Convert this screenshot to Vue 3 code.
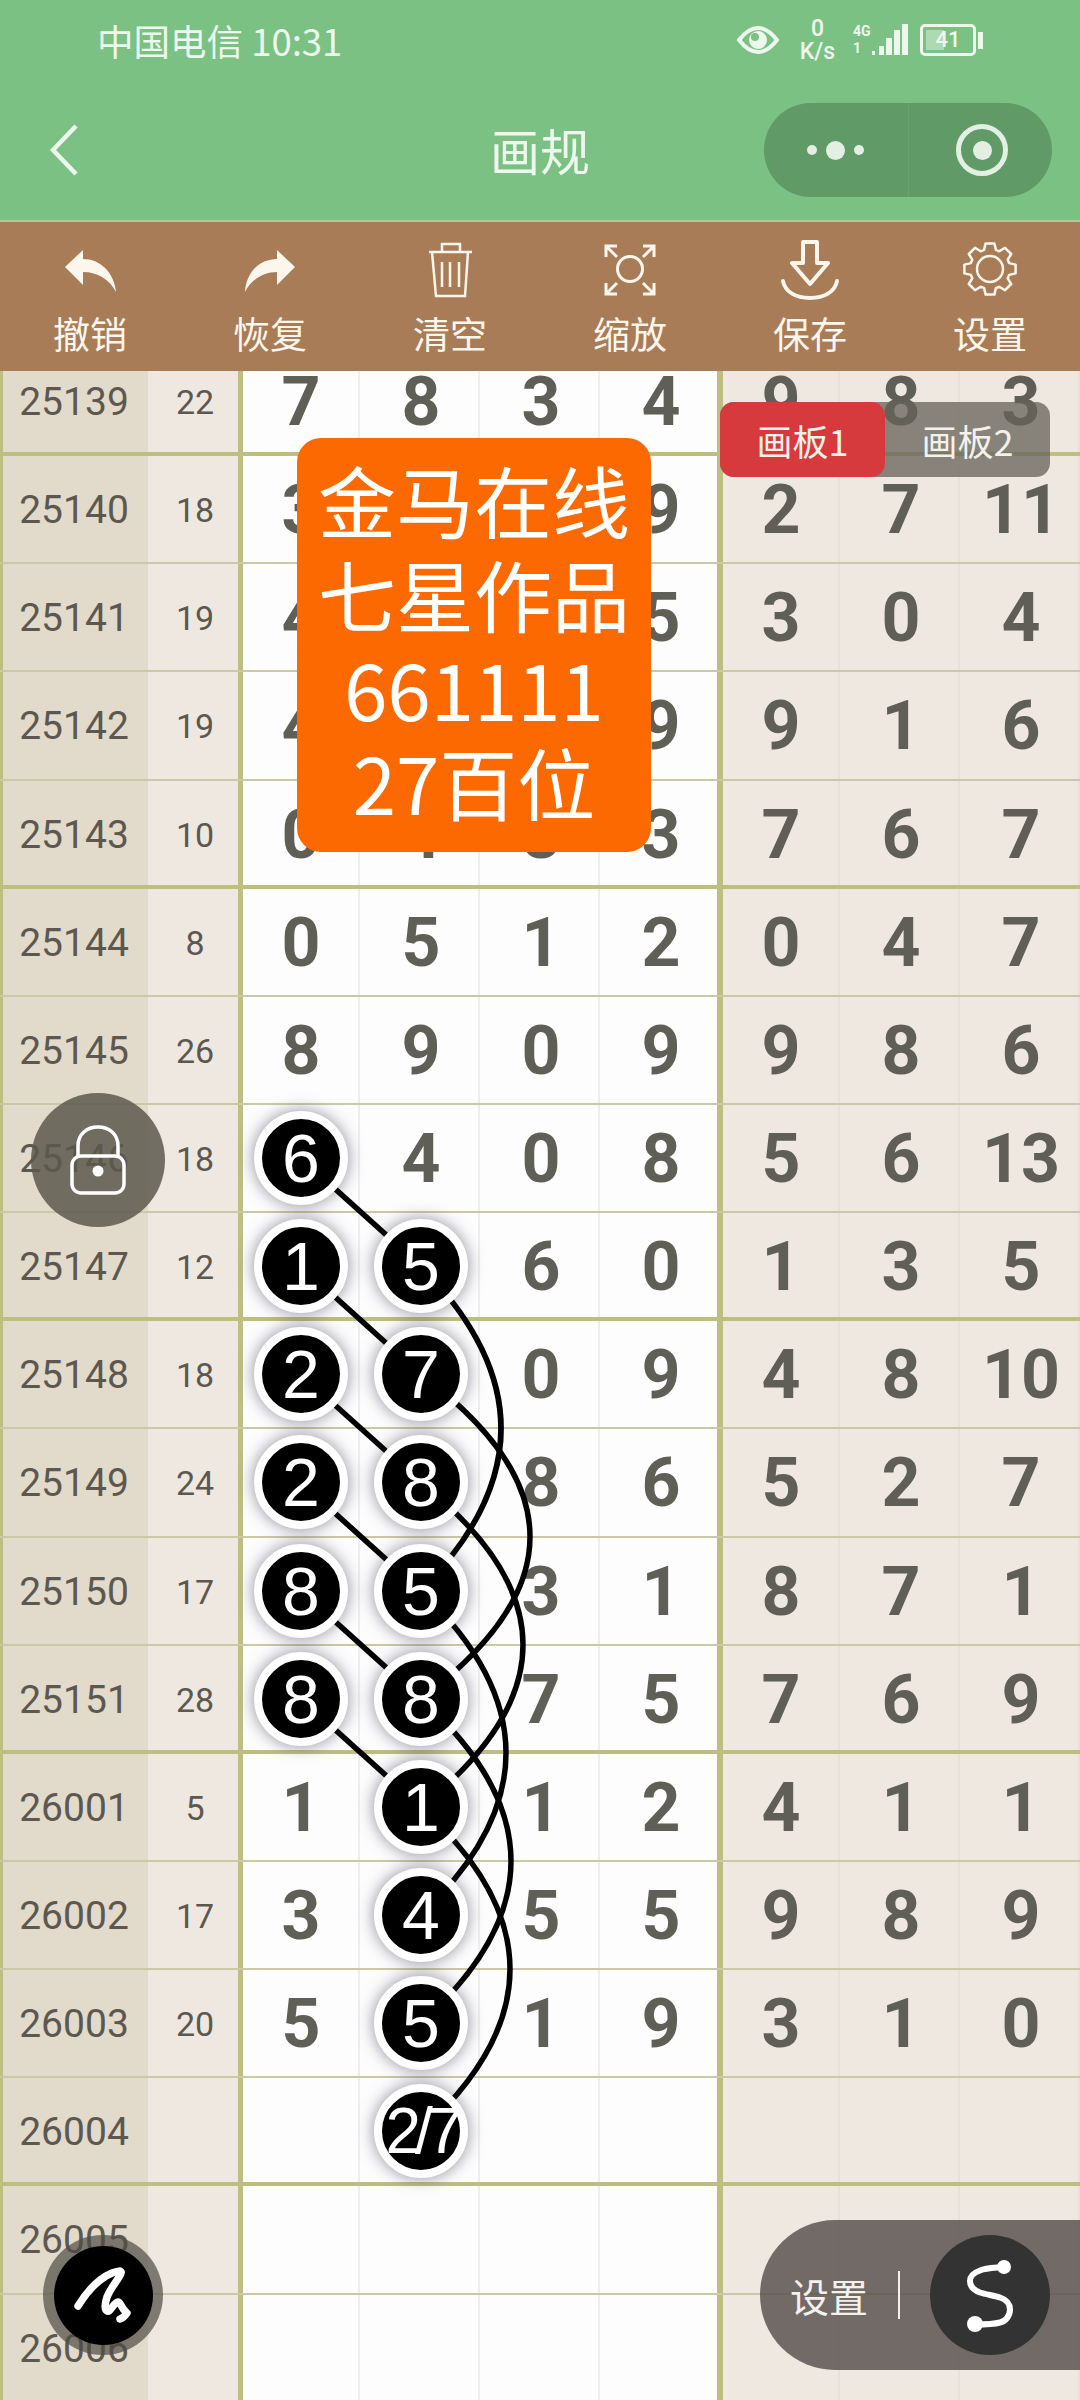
<template>
  <div class="page">
    <div class="statusbar">
      <span class="carrier">中国电信 10:31</span>
      <div class="status-icons">
        <svg class="eye" width="42" height="28" viewBox="0 0 42 28">
          <path d="M2 14C9 5 15 2 21 2s12 3 19 12c-7 9-13 12-19 12S9 23 2 14z" fill="none" stroke="#eef7ee" stroke-width="4" />
          <circle cx="21" cy="14" r="9" fill="#eef7ee" />
          <circle cx="18" cy="11" r="4" fill="#7bc183" />
        </svg>
        <div class="speed"><span>0</span><span>K/s</span></div>
        <div class="signal">
          <div class="net"><span>4G</span><span>1</span></div>
          <svg width="36" height="34" viewBox="0 0 36 34">
            <rect x="0" y="28" width="3" height="4" fill="#eef7ee" />
            <rect x="7" y="23" width="5" height="9" fill="#eef7ee" />
            <rect x="14" y="15" width="6" height="17" fill="#eef7ee" />
            <rect x="22" y="7" width="6" height="25" fill="#eef7ee" />
            <rect x="30" y="1" width="6" height="31" fill="#eef7ee" />
          </svg>
        </div>
        <div class="battery">
          <div class="battery-body"><span class="battery-fill"></span><span class="battery-num">41</span></div>
          <span class="battery-cap"></span>
        </div>
      </div>
    </div>

    <div class="navbar">
      <svg class="back" width="32" height="54" viewBox="0 0 32 54">
        <path d="M28 3L5 27l23 24" fill="none" stroke="#eef7ee" stroke-width="4.5" />
      </svg>
      <span class="title">画规</span>
      <div class="capsule">
        <div class="capsule-side">
          <i class="dot"></i><i class="dot big"></i><i class="dot"></i>
        </div>
        <div class="capsule-side second">
          <span class="target"><i></i></span>
        </div>
      </div>
    </div>

    <div class="toolbar">
      <div v-for="tool in tools" :key="tool.label" class="tool">
        <svg width="60" height="60" viewBox="0 0 60 60" v-html="tool.icon"></svg>
        <span>{{ tool.label }}</span>
      </div>
    </div>

    <div class="board">
      <div class="sheet">
        <div v-for="row in rows" :key="row.no" class="row" :class="{ 'row-end': row.end }">
          <div class="cell period">{{ row.no }}</div>
          <div class="cell sum">{{ row.sum }}</div>
          <div v-for="(n, c) in row.main" :key="c" class="cell num">
            <span v-if="row.balls[c] !== undefined" class="ball" :class="{ small: row.balls[c].length > 1 }">{{ row.balls[c] }}</span>
            <template v-else>{{ n }}</template>
          </div>
          <div v-for="(n, c) in row.side" :key="c" class="cell num side">{{ n }}</div>
        </div>
        <svg class="links" width="1080" height="2060" viewBox="0 0 1080 2060">
          <path v-for="(d, i) in links" :key="i" :d="d" fill="none" stroke="#000" stroke-width="5.5" />
        </svg>
      </div>

      <div class="tabs">
        <span class="tab active">画板1</span>
        <span class="tab">画板2</span>
      </div>

      <div class="notice">
        <span>金马在线</span>
        <span>七星作品</span>
        <span>661111</span>
        <span>27百位</span>
      </div>

      <div class="lock">
        <svg width="56" height="70" viewBox="0 0 56 70">
          <path d="M8 32V21C8 9 17 2 28 2s20 7 20 19v11" fill="none" stroke="#fff" stroke-width="3.5" />
          <rect x="2" y="31" width="52" height="37" rx="9" fill="none" stroke="#fff" stroke-width="3.5" />
          <circle cx="28" cy="46" r="5.5" fill="#fff" />
        </svg>
      </div>

      <div class="brush">
        <div class="brush-inner">
          <svg width="70" height="70" viewBox="0 0 70 70">
            <path d="M10 46C18 33 30 19 44 13c5-2 10-3 9 0-2 6-10 14-14 24-2 6-3 12 0 14 3 2 7-9 11-9 3 0 2 5 9 11-2 3-4 5-7 6" fill="none" stroke="#fff" stroke-width="7.5" stroke-linecap="round" stroke-linejoin="round" />
          </svg>
        </div>
      </div>

      <div class="setting">
        <span class="setting-text">设置</span>
        <i class="divider"></i>
        <div class="setting-btn">
          <svg width="60" height="84" viewBox="0 0 60 84">
            <path d="M44 14C34 15 26 15 20 17.500 13 20 10 24 10 28c0 7 6 10 10 11.500 6 2 14 3 20 5 6 2 10 6 10 12 0 7-5 12-10 13-7 2-16 2-25 2" fill="none" stroke="#fff" stroke-width="6" stroke-linecap="round" />
            <circle cx="44" cy="14" r="7" fill="#fff" />
            <circle cx="15" cy="71" r="8" fill="#fff" />
          </svg>
        </div>
      </div>
    </div>
  </div>
</template>

<script setup>
const ROW_H = 108.15
const COL_X = [301, 421]

// 8齿齿轮轮廓
const gearPath = () => {
  const pts = []
  for (let i = 0; i < 8; i++) {
    const a = (Math.PI / 4) * i - Math.PI / 2
    const p = (r, da) => `${(30 + r * Math.cos(a + da)).toFixed(1)} ${(29 + r * Math.sin(a + da)).toFixed(1)}`
    pts.push(p(20, -0.3), p(26, -0.17), p(26, 0.17), p(20, 0.3))
  }
  return `M${pts.join('L')}z`
}

const tools = [
  { label: '撤销', icon: '<path d="M5 27L23 10v9C40 19 54 32 56 52 50 40 38 32 23 32v13z" fill="#fdf6ec"/>' },
  { label: '恢复', icon: '<path d="M55 27L37 10v9C20 19 6 32 5 52 11 40 23 32 37 32v13z" fill="#fdf6ec"/>' },
  {
    label: '清空',
    icon: '<g fill="none" stroke="#fdf6ec" stroke-width="2.5"><path d="M9 12h43M22 12V4h18v8M12 12l4 44h29l3-44M22 22v25M30 22v25M39 22v25"/></g>'
  },
  {
    label: '缩放',
    icon: '<g fill="none" stroke="#fdf6ec" stroke-width="3"><circle cx="30" cy="29" r="12.500"/><path d="M6 17V6h11M54 17V6H43M6 43v11h11M54 43v11H43M6 6l11 11M54 6L43 17M6 54l11-11M54 54L43 43"/></g>'
  },
  {
    label: '保存',
    icon: '<g fill="none" stroke="#fdf6ec" stroke-width="4"><path d="M23 2h14v21h11L30 44 12 23h11z" stroke-linejoin="round"/><path d="M3 41c2 11 13 17 27 17s25-6 27-17" stroke-linecap="round"/></g>'
  },
  {
    label: '设置',
    icon: `<g fill="none" stroke="#fdf6ec" stroke-width="2.500" stroke-linejoin="round"><circle cx="30" cy="29" r="13"/><path d="${gearPath()}"/></g>`
  }
]

// [期号, 和值, 前四位, 后三位, 落点]
const source = [
  ['25139', '22', '7834', ['9', '8', '3']],
  ['25140', '18', '3259', ['2', '7', '11']],
  ['25141', '19', '4375', ['3', '0', '4']],
  ['25142', '19', '4169', ['9', '1', '6']],
  ['25143', '10', '0483', ['7', '6', '7']],
  ['25144', '8', '0512', ['0', '4', '7']],
  ['25145', '26', '8909', ['9', '8', '6']],
  ['25146', '18', '6408', ['5', '6', '13'], { 0: '6' }],
  ['25147', '12', '1560', ['1', '3', '5'], { 0: '1', 1: '5' }],
  ['25148', '18', '2709', ['4', '8', '10'], { 0: '2', 1: '7' }],
  ['25149', '24', '2886', ['5', '2', '7'], { 0: '2', 1: '8' }],
  ['25150', '17', '8531', ['8', '7', '1'], { 0: '8', 1: '5' }],
  ['25151', '28', '8875', ['7', '6', '9'], { 0: '8', 1: '8' }],
  ['26001', '5', '1112', ['4', '1', '1'], { 1: '1' }],
  ['26002', '17', '3455', ['9', '8', '9'], { 1: '4' }],
  ['26003', '20', '5519', ['3', '1', '0'], { 1: '5' }],
  ['26004', '', '    ', ['', '', ''], { 1: '2/7' }],
  ['26005', '', '    ', ['', '', '']],
  ['26006', '', '    ', ['', '', '']]
]

const rows = source.map(([no, sum, main, side, balls], i) => ({
  no,
  sum,
  main: main.split('').map((n) => n.trim()),
  side,
  balls: balls || {},
  end: i % 4 === 0
}))

const centerY = (i) => ROW_H * (i + 0.5) - 1

// 相邻列的直线
const straight = [7, 8, 9, 10, 11, 12].map(
  (i) => `M${COL_X[0]} ${centerY(i)}L${COL_X[1]} ${centerY(i + 1)}`
)

// 隔三行的弧线: [起始行, 最大外凸]
const arcs = [
  [8, 80],
  [9, 109],
  [10, 102],
  [11, 85],
  [12, 90],
  [13, 89]
].map(([i, bulge]) => {
  const x = COL_X[1]
  const cx = x + bulge * 2
  return `M${x} ${centerY(i)}Q${cx} ${centerY(i + 1.5)} ${x} ${centerY(i + 3)}`
})

const links = [...straight, ...arcs]
</script>

<style scoped>
.page {
  position: relative;
  width: 1080px;
  height: 2400px;
  overflow: hidden;
  display: flex;
  flex-direction: column;
  font-family: Roboto, "Noto Sans CJK SC", sans-serif;
  background: #fdfdfe;
}

.statusbar {
  height: 80px;
  padding: 0 97px 0 97px;
  box-sizing: border-box;
  flex: none;
  display: flex;
  align-items: center;
  justify-content: space-between;
  background: #7bc183;
  color: #eef7ee;
}
.carrier {
  font-size: 36.5px;
  font-family: "Noto Sans CJK SC", sans-serif;
}
.status-icons {
  display: flex;
  align-items: center;
}
.speed {
  width: 37px;
  margin: 0 17px 0 20px;
  display: flex;
  flex-direction: column;
  align-items: center;
  line-height: 23px;
  font-size: 23px;
  font-weight: 500;
}
.signal {
  display: flex;
  align-items: center;
  margin-right: 12px;
}
.net {
  width: 19px;
  display: flex;
  flex-direction: column;
  line-height: 17px;
  font-size: 14px;
  font-weight: 700;
}
.battery {
  display: flex;
  align-items: center;
  gap: 2px;
}
.battery-body {
  position: relative;
  width: 56px;
  height: 32px;
  box-sizing: border-box;
  border: 3px solid #eef7ee;
  border-radius: 5px;
  padding: 3px;
}
.battery-fill {
  display: block;
  width: 40%;
  height: 100%;
  background: rgba(238, 247, 238, 0.45);
}
.battery-num {
  position: absolute;
  inset: 0;
  text-align: center;
  font-size: 22px;
  line-height: 26px;
  font-weight: 500;
}
.battery-cap {
  width: 5px;
  height: 17px;
  background: #eef7ee;
}

.navbar {
  position: relative;
  height: 142px;
  flex: none;
  display: flex;
  align-items: center;
  justify-content: space-between;
  padding: 0 28px 0 48px;
  box-sizing: border-box;
  background: #7bc183;
  border-bottom: 2px solid #a4cf96;
}
.back {
  margin-top: 0;
}
.title {
  position: absolute;
  left: 0;
  right: 0;
  top: 36px;
  text-align: center;
  font-family: "Noto Sans CJK SC", sans-serif;
  font-size: 50px;
  line-height: 66px;
  color: #eef7ee;
}
.capsule {
  width: 288px;
  height: 94px;
  display: flex;
  border-radius: 47px;
  background: #5f9a67;
}
.capsule-side {
  flex: 1;
  display: flex;
  align-items: center;
  justify-content: center;
  gap: 9px;
}
.capsule-side.second {
  border-left: 1px solid rgba(123, 193, 131, 0.25);
}
.dot {
  width: 10px;
  height: 10px;
  border-radius: 50%;
  background: #e3efe2;
}
.dot.big {
  width: 19px;
  height: 19px;
}
.target {
  width: 52px;
  height: 52px;
  margin-left: 4px;
  display: flex;
  align-items: center;
  justify-content: center;
  box-sizing: border-box;
  border: 5px solid #e3efe2;
  border-radius: 50%;
}
.target i {
  width: 19px;
  height: 19px;
  border-radius: 50%;
  background: #e3efe2;
}

.toolbar {
  height: 149px;
  flex: none;
  display: grid;
  grid-template-columns: repeat(6, 180px);
  background: #a87c57;
  color: #fdf6ec;
}
.tool {
  display: flex;
  flex-direction: column;
  align-items: center;
  padding-top: 18px;
  font-family: "Noto Sans CJK SC", sans-serif;
  font-size: 37px;
  line-height: 50px;
}
.tool svg {
  flex: none;
  margin-bottom: 8px;
}

.board {
  flex: 1;
  min-height: 0;
  overflow: hidden;
}
.sheet {
  position: relative;
  margin-top: -23px;
}
.row {
  height: 108.15px;
  box-sizing: border-box;
  display: grid;
  grid-template-columns: 148px 92px repeat(7, 120px);
  border-bottom: 2px solid #c9c9a8;
}
.row-end {
  border-bottom: 4px solid #bdbf82;
}
.cell {
  padding-top: 2px;
  display: flex;
  align-items: center;
  justify-content: center;
  box-sizing: border-box;
  min-width: 0;
  color: #5c5850;
}
.row-end .cell {
  padding-top: 4px;
}
.period {
  box-shadow: inset 3px 0 #bdbf82;
  background: #e2dacb;
  font-size: 39px;
  font-weight: 400;
}
.sum {
  padding-left: 2px;
  box-shadow: inset -2px 0 #bdbf82;
  background: #efe8e1;
  font-size: 34px;
  font-weight: 400;
}
.num {
  padding-left: 2px;
  box-shadow: inset -2px 0 #eeeef0;
  background: #fdfdfe;
  color: #5f5f58;
  font-size: 68px;
  font-weight: 700;
}
.num:nth-child(3) {
  box-shadow: inset 3px 0 #bdbf82, inset -2px 0 #eeeef0;
}
.num:nth-child(6) {
  box-shadow: inset -3px 0 #bdbf82;
}
.side {
  box-shadow: inset -2px 0 #e8e1d9;
  background: #efe8e1;
}
.num.side:nth-child(7) {
  box-shadow: inset 3px 0 #bdbf82, inset -2px 0 #e8e1d9;
}
.ball {
  position: relative;
  z-index: 2;
  width: 94px;
  height: 94px;
  margin-top: -2px;
  flex: none;
  display: flex;
  align-items: center;
  justify-content: center;
  box-sizing: border-box;
  border: 8px solid #fff;
  border-radius: 50%;
  background: #000;
  color: #fff;
  font-family: "Liberation Sans", sans-serif;
  font-size: 68px;
  font-weight: 400;
  box-shadow: 0 0 16px rgba(50, 50, 70, 0.55);
}
.ball.small {
  font-size: 64px;
  letter-spacing: -6px;
}
.links {
  position: absolute;
  left: 0;
  top: 0;
  z-index: 1;
}

.tabs {
  position: absolute;
  left: 720px;
  top: 402px;
  width: 330px;
  height: 75px;
  display: flex;
  border-radius: 14px;
  background: rgba(100, 98, 88, 0.75);
}
.tab {
  width: 165px;
  display: flex;
  align-items: center;
  justify-content: center;
  border-radius: 14px;
  color: #f4f1ea;
  font-family: "Noto Sans CJK SC", sans-serif;
  font-size: 36px;
}
.tab.active {
  background: #d63a3c;
}

.notice {
  position: absolute;
  left: 297px;
  top: 438px;
  width: 354px;
  height: 414px;
  padding-top: 14px;
  box-sizing: border-box;
  display: flex;
  flex-direction: column;
  align-items: center;
  border-radius: 24px;
  background: #fb6900;
  color: #fff;
  font-family: "Noto Sans CJK SC", sans-serif;
  font-size: 78px;
  line-height: 94px;
}

.lock {
  position: absolute;
  left: 31px;
  top: 1093px;
  width: 134px;
  height: 134px;
  display: flex;
  align-items: center;
  justify-content: center;
  border-radius: 50%;
  background: rgba(92, 88, 78, 0.85);
}

.brush {
  position: absolute;
  left: 43px;
  top: 2235px;
  width: 120px;
  height: 120px;
  display: flex;
  align-items: center;
  justify-content: center;
  border-radius: 50%;
  background: rgba(80, 76, 66, 0.7);
}
.brush-inner {
  width: 99px;
  height: 99px;
  display: flex;
  align-items: center;
  justify-content: center;
  border-radius: 50%;
  background: #000;
}

.setting {
  position: absolute;
  left: 760px;
  top: 2220px;
  width: 320px;
  height: 150px;
  display: flex;
  align-items: center;
  border-radius: 75px 0 0 75px;
  background: rgba(85, 78, 76, 0.82);
}
.setting-text {
  margin-left: 30px;
  color: #f4f1ea;
  font-family: "Noto Sans CJK SC", sans-serif;
  font-size: 39px;
}
.divider {
  width: 2px;
  height: 48px;
  margin-left: 30px;
  background: #f4f1ea;
}
.setting-btn {
  width: 120px;
  height: 120px;
  margin-left: 30px;
  display: flex;
  align-items: center;
  justify-content: center;
  border-radius: 50%;
  background: #333;
}
</style>
